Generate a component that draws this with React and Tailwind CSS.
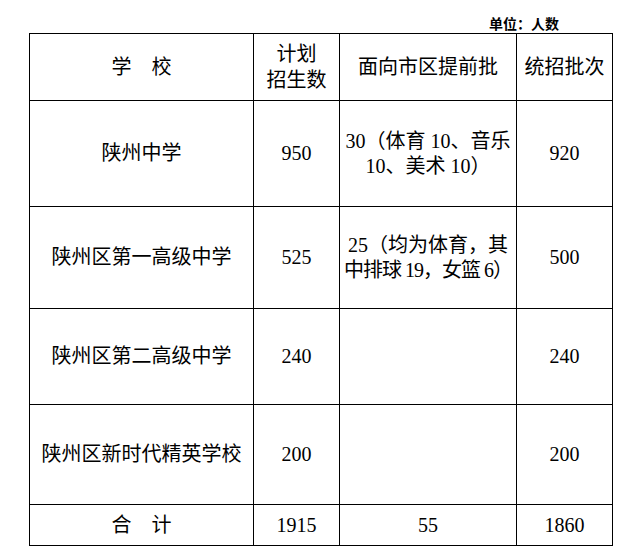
const rows = [
    { school: '陕州中学', plan: '950', early: ['30（体育 10、音乐', '10、美术 10）'], unified: '920', h: 'h-[106px]' },
    { school: '陕州区第一高级中学', plan: '525', early: ['25（均为体育，其', '中排球 19，女篮 6）'], unified: '500', h: 'h-[102px]' },
    { school: '陕州区第二高级中学', plan: '240', early: [], unified: '240', h: 'h-[96px]' },
    { school: '陕州区新时代精英学校', plan: '200', early: [], unified: '200', h: 'h-[100px]' },
];

const cell = 'border border-black text-center align-middle p-0';

export default function App() {
    return (
        <div
            className="w-[633px] h-[559px] bg-white text-black pl-[29px]"
            style={{ fontFamily: '"Liberation Serif", "Noto Sans CJK SC", serif' }}
        >
            <div className="h-[33px] w-[583px] flex items-end justify-end pr-[53px]">
                <span
                    className="text-[14px] leading-[18px] font-bold pb-[1px]"
                    style={{ fontFamily: '"Noto Sans CJK SC", sans-serif' }}
                >
                    单位：人数
                </span>
            </div>

            <table className="w-[583px] table-fixed border-collapse text-[20px]">
                <colgroup>
                    <col className="w-[224px]" />
                    <col className="w-[86px]" />
                    <col className="w-[177px]" />
                    <col className="w-[96px]" />
                </colgroup>
                <thead>
                    <tr>
                        <th className={`${cell} h-[67px] font-normal leading-[26px]`}>学　校</th>
                        <th className={`${cell} font-normal leading-[26px]`}>
                            <div>计划</div>
                            <div>招生数</div>
                        </th>
                        <th className={`${cell} font-normal leading-[26px]`}>面向市区提前批</th>
                        <th className={`${cell} font-normal leading-[26px]`}>统招批次</th>
                    </tr>
                </thead>
                <tbody>
                    {rows.map((r) => (
                        <tr key={r.school}>
                            <td className={`${cell} ${r.h} whitespace-nowrap leading-[25px]`}>{r.school}</td>
                            <td className={`${cell} leading-[25px]`}>{r.plan}</td>
                            <td className={`${cell} leading-[25px] whitespace-pre`}>
                                {r.early.map((line, i) => (
                                    <div key={i} className={i === 1 && r.plan === '525' ? 'tracking-[-1px]' : ''}>
                                        {line}
                                    </div>
                                ))}
                            </td>
                            <td className={`${cell} leading-[25px]`}>{r.unified}</td>
                        </tr>
                    ))}
                    <tr>
                        <td className={`${cell} h-[41px] leading-[25px]`}>合　计</td>
                        <td className={`${cell} leading-[25px]`}>1915</td>
                        <td className={`${cell} leading-[25px]`}>55</td>
                        <td className={`${cell} leading-[25px]`}>1860</td>
                    </tr>
                </tbody>
            </table>
        </div>
    );
}
